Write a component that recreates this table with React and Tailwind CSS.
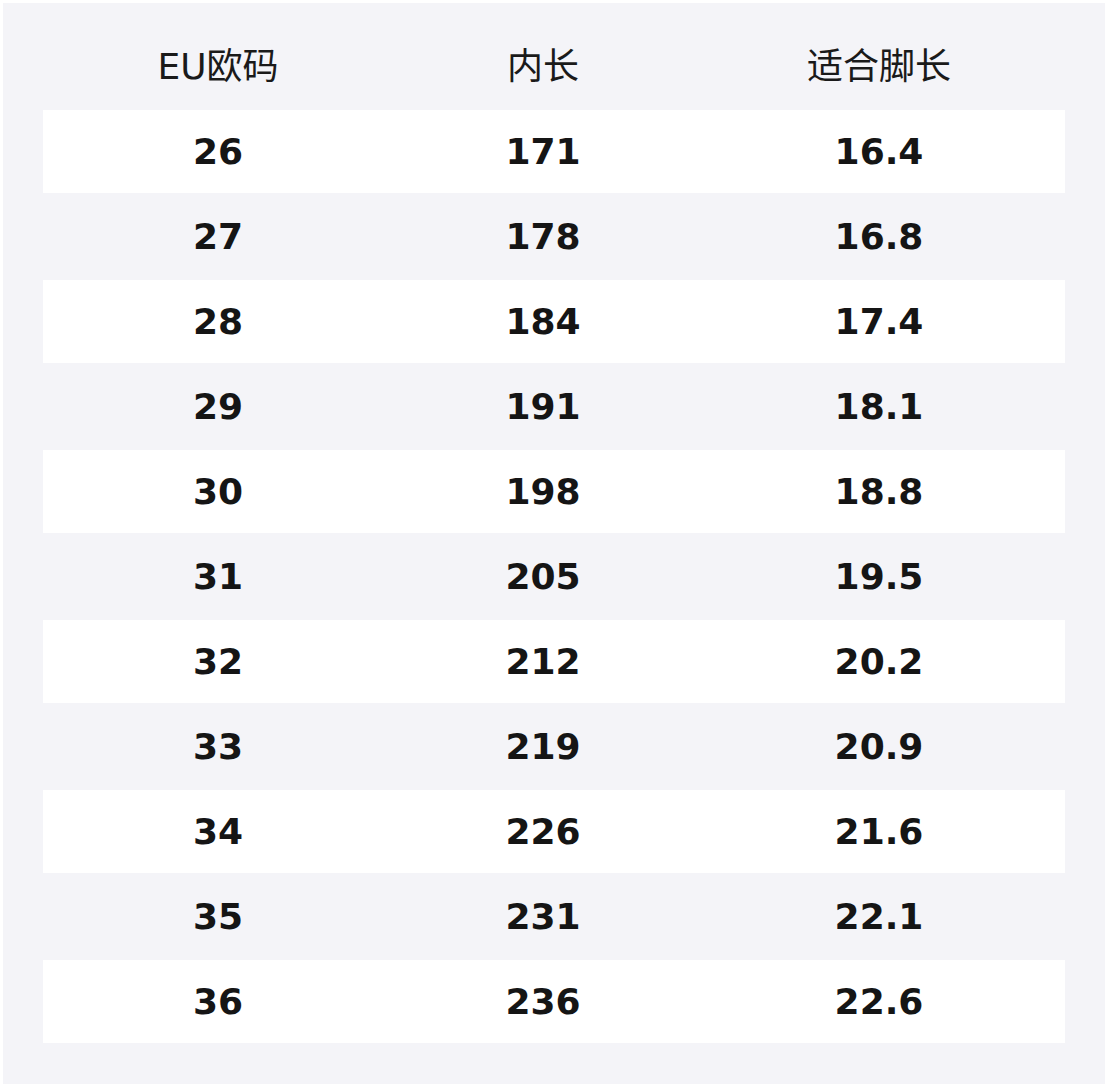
const rows = [
  ['26', '171', '16.4'],
  ['27', '178', '16.8'],
  ['28', '184', '17.4'],
  ['29', '191', '18.1'],
  ['30', '198', '18.8'],
  ['31', '205', '19.5'],
  ['32', '212', '20.2'],
  ['33', '219', '20.9'],
  ['34', '226', '21.6'],
  ['35', '231', '22.1'],
  ['36', '236', '22.6'],
]

const font = { fontFamily: '"DejaVu Sans", "Noto Sans CJK SC", sans-serif' }

export default function App() {
  return (
    <div className="bg-white p-[3px] w-[1108px]" style={font}>
      <div className="bg-[#f4f4f8] px-[40px] pb-[40px]">
        <div className="grid grid-cols-[350px_300px_372px] pt-[42px] pb-[20px] text-[36px] leading-[44px] text-[#1a1a1a]">
          <div className="text-center">EU欧码</div>
          <div className="text-center">内长</div>
          <div className="text-center">适合脚长</div>
        </div>
        {rows.map((r, i) => (
          <div key={r[0]} className="h-[85px] py-[1px]">
            <div
              className={`grid grid-cols-[350px_300px_372px] h-full items-center text-[36px] font-bold text-[#151515] ${
                i % 2 === 0 ? 'bg-white' : ''
              }`}
            >
              {r.map((v, j) => (
                <div key={j} className="text-center">{v}</div>
              ))}
            </div>
          </div>
        ))}
      </div>
    </div>
  )
}
